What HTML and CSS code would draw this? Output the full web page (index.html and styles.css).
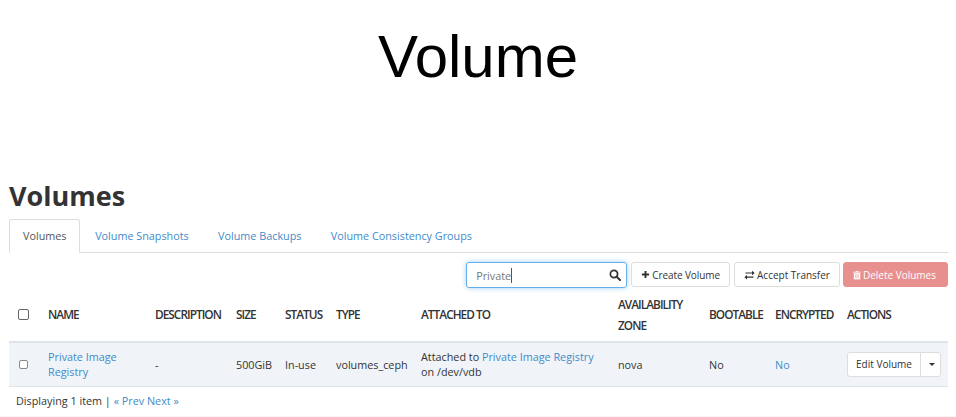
FILE: index.html
```html
<!DOCTYPE html>
<html lang="en">
<head>
<meta charset="utf-8">
<title>Volume</title>
<link rel="stylesheet" href="styles.css">
</head>
<body>
<div class="slide-title">Volume</div>
<main class="panel">
  <h1 class="page-title">Volumes</h1>
  <ul class="tabs">
    <li class="tab active">Volumes</li>
    <li class="tab">Volume Snapshots</li>
    <li class="tab">Volume Backups</li>
    <li class="tab">Volume Consistency Groups</li>
  </ul>
  <div class="toolbar">
    <div class="search">
      <span class="search-text">Private</span><span class="caret"></span>
      <svg class="search-icon" viewBox="0 0 12 12" width="12" height="12"><circle cx="5" cy="5" r="3.6" fill="none" stroke="#333" stroke-width="1.7"/><path d="M7.7 7.7 11 11" stroke="#333" stroke-width="2" stroke-linecap="round"/></svg>
    </div>
    <button class="btn btn-create">
      <svg class="ico" viewBox="0 0 10 10" width="9" height="9"><path d="M5 1v8M1 5h8" stroke="#333" stroke-width="2.2"/></svg>Create Volume
    </button>
    <button class="btn btn-transfer">
      <svg class="ico" viewBox="0 0 11 10" width="11" height="10"><path d="M0 3h8M0 7.2h8" stroke="#333" stroke-width="1.2" transform="translate(1.5 0)"/><path d="M8 .8 10.6 3 8 5.2zM3 5 .4 7.2 3 9.4z" fill="#333"/></svg>Accept Transfer
    </button>
    <button class="btn danger">
      <svg class="ico" viewBox="0 0 10 11" width="8" height="10"><path d="M3.5 1.5V.6h3v.9H10v1H0v-1z" fill="#fff"/><path d="M1 3.2h8V11H1z" fill="#fff"/><path d="M3.3 4.5v5M5 4.5v5M6.7 4.5v5" stroke="#e8908e" stroke-width=".7"/></svg>Delete Volumes
    </button>
  </div>
  <table class="volumes">
    <colgroup>
      <col class="c-check"><col class="c-name"><col class="c-desc"><col class="c-size"><col class="c-status"><col class="c-type"><col class="c-att"><col class="c-zone"><col class="c-boot"><col class="c-enc"><col class="c-act">
    </colgroup>
    <thead>
      <tr>
        <th><span class="box"></span></th>
        <th>NAME</th><th>DESCRIPTION</th><th>SIZE</th><th>STATUS</th><th>TYPE</th><th>ATTACHED TO</th><th>AVAILABILITY ZONE</th><th>BOOTABLE</th><th>ENCRYPTED</th><th>ACTIONS</th>
      </tr>
    </thead>
    <tbody>
      <tr>
        <td><span class="box small"></span></td>
        <td><a>Private Image Registry</a></td>
        <td>-</td><td>500GiB</td><td>In-use</td><td>volumes_ceph</td>
        <td>Attached to <a>Private Image Registry</a> on /dev/vdb</td>
        <td>nova</td><td>No</td><td><a>No</a></td>
        <td>
          <div class="split"><span class="split-main">Edit Volume</span><span class="split-caret"></span></div>
        </td>
      </tr>
    </tbody>
  </table>
  <div class="footer">Displaying 1 item | <a>« Prev</a> <a>Next »</a></div>
</main>
</body>
</html>
```

FILE: styles.css
```css
* { box-sizing: border-box; }
html, body { margin: 0; padding: 0; background: #fff; }
body { width: 956px; height: 417px; overflow: hidden; font-family: "Open Sans", "Noto Sans", sans-serif; color: #333; font-size: 10.8px; border-bottom: 1px solid #f6f6f6; }
a { color: #428bca; }

.slide-title { font-family: "Liberation Sans", Arial, sans-serif; font-size: 60px; line-height: 68px; color: #000; text-align: center; padding-top: 23px; height: 179px; }

.panel { padding: 0 8px 0 9px; }
.page-title { margin: 0; font-size: 27px; line-height: 34px; height: 40px; font-weight: 700; color: #333; }

.tabs { list-style: none; margin: 0; padding: 0; display: flex; height: 34px; border-bottom: 1px solid #ddd; }
.tab { padding: 0 13.7px; line-height: 31px; height: 34px; color: #428bca; border: 1px solid transparent; }
.tab.active { color: #555; background: #fff; border-color: #ddd; border-bottom-color: #fff; border-radius: 3px 3px 0 0; padding: 0 13px; }

.toolbar { display: flex; justify-content: flex-end; align-items: flex-start; margin-top: 9px; height: 28px; }
.search { width: 161px; height: 26px; border: 1px solid #66afe9; border-radius: 3px; box-shadow: 0 0 5px rgba(102,175,233,.6); display: flex; align-items: center; padding: 0 5px 0 9px; color: #777; margin-right: 4px; }
.caret { width: 1px; height: 15px; background: #555; }
.search-icon { margin-left: auto; }
.btn { height: 25px; padding: 0 9px; border: 1px solid #ddd; border-radius: 3px; background: #fff; font: inherit; font-size: 10px; color: #333; display: flex; align-items: center; gap: 2px; margin-right: 4px; }
.btn-create { letter-spacing: -.08px; }
.btn-transfer { margin-right: 3px; }
.btn.danger { background: #e8908e; border-color: #e8908e; color: #fff; margin-right: 0; padding: 0 11px 0 9px; }

.volumes { width: 939px; table-layout: fixed; border-collapse: collapse; }
.c-check { width: 31px; } .c-name { width: 107px; } .c-desc { width: 81px; } .c-size { width: 49px; }
.c-status { width: 51px; } .c-type { width: 85px; } .c-att { width: 197px; } .c-zone { width: 91px; }
.c-boot { width: 66px; } .c-enc { width: 72px; } .c-act { width: 109px; }
th, td { padding: 0 8px; text-align: left; vertical-align: middle; line-height: 15px; }
th { height: 52px; padding-bottom: 2px; font-weight: 600; font-size: 11.8px; line-height: 21px; letter-spacing: -.95px; color: #333; border-bottom: 2px solid #dde4ec; }
td { height: 44px; background: #f0f4f8; border-bottom: 1px solid #dde4ec; color: #333; font-size: 10.8px; }
.box { display: block; width: 11px; height: 11px; border: 1px solid #666; border-radius: 2px; background: #fff; margin-left: 1px; }
.box.small { width: 9px; height: 9px; border-color: #888; margin-left: 2px; }

.split { display: flex; height: 25px; width: 94px; background: #fff; border: 1px solid #ddd; border-radius: 3px; align-items: center; font-size: 10px; }
.split-main { width: 73px; text-align: center; border-right: 1px solid #ddd; line-height: 23px; }
.split-caret { width: 0; height: 0; border: 3px solid transparent; border-top-color: #333; border-bottom: 0; margin-left: 8px; }

.footer { padding: 6px 7px 0; line-height: 15px; color: #333; }
```
